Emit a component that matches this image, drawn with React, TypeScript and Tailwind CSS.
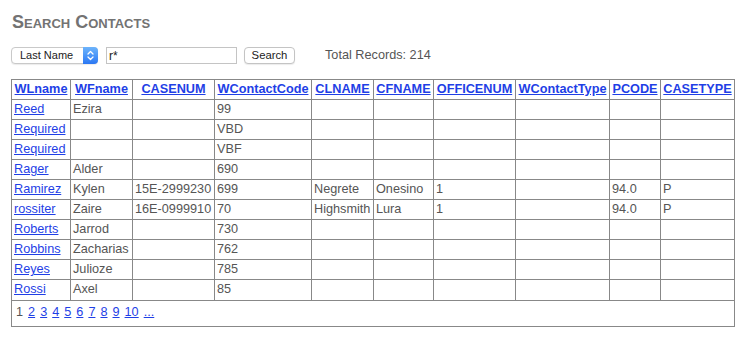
import React from "react";

const cols = [59, 62, 82, 97, 62, 60, 82, 94, 51, 74];
const headers = ["WLname", "WFname", "CASENUM", "WContactCode", "CLNAME", "CFNAME", "OFFICENUM", "WContactType", "PCODE", "CASETYPE"];
const rows: string[][] = [
  ["Reed", "Ezira", "", "99", "", "", "", "", "", ""],
  ["Required", "", "", "VBD", "", "", "", "", "", ""],
  ["Required", "", "", "VBF", "", "", "", "", "", ""],
  ["Rager", "Alder", "", "690", "", "", "", "", "", ""],
  ["Ramirez", "Kylen", "15E-2999230", "699", "Negrete", "Onesino", "1", "", "94.0", "P"],
  ["rossiter", "Zaire", "16E-0999910", "70", "Highsmith", "Lura", "1", "", "94.0", "P"],
  ["Roberts", "Jarrod", "", "730", "", "", "", "", "", ""],
  ["Robbins", "Zacharias", "", "762", "", "", "", "", "", ""],
  ["Reyes", "Julioze", "", "785", "", "", "", "", "", ""],
  ["Rossi", "Axel", "", "85", "", "", "", "", "", ""],
];

export default function App() {
  return (
    <div
      className="w-[752px] h-[346px] bg-white text-[#555] px-[11px] pt-[12px]"
      style={{ fontFamily: '"Liberation Sans", Arial, sans-serif' }}
    >
      <h1 className="text-[18px] leading-[20px] font-bold text-[#737373] pl-[1px] [font-variant:small-caps]">
        Search Contacts
      </h1>
      <div className="mt-[15px] flex items-center h-[17px]">
        <div className="relative w-[87px] h-[17px] rounded-[4px] border border-[#c9c9c9] bg-white shadow-[0_1px_1px_rgba(0,0,0,0.08)] flex items-center text-[11px] text-[#222] pl-[8px]">
          Last Name
          <div className="absolute right-[-1px] top-[-1px] bottom-[-1px] w-[15px] rounded-r-[4px] bg-gradient-to-b from-[#6db4fb] to-[#2b77f3] flex items-center justify-center">
            <svg width="7" height="11" viewBox="0 0 7 11" fill="none" stroke="white" strokeWidth="1.3" strokeLinecap="round" strokeLinejoin="round">
              <path d="M1 4 L3.5 1.5 L6 4" />
              <path d="M1 7 L3.5 9.5 L6 7" />
            </svg>
          </div>
        </div>
        <div className="ml-[8px] w-[131px] h-[17px] border border-[#c4c4c4] bg-white flex items-center pl-[2px] text-[12px] text-[#222]">
          r*
        </div>
        <div className="ml-[7px] w-[51px] h-[17px] rounded-[4px] border border-[#c4c4c4] bg-white shadow-[0_1px_1px_rgba(0,0,0,0.08)] flex items-center justify-center text-[11.3px] text-[#222]">
          Search
        </div>
        <div className="ml-[30px] text-[12.7px] text-[#555]">Total Records: 214</div>
      </div>
      <table className="mt-[15px] w-[724px] table-fixed border-collapse border border-[#888] text-[12.7px]">
        <colgroup>
          {cols.map((w, i) => (
            <col key={i} style={{ width: w }} />
          ))}
        </colgroup>
        <thead>
          <tr className="h-[20px]">
            {headers.map((h) => (
              <th key={h} className="border border-[#888] px-[2px] py-0 text-center font-bold whitespace-nowrap overflow-hidden">
                <a href="#" className="text-[#1f3fe6] underline">{h}</a>
              </th>
            ))}
          </tr>
        </thead>
        <tbody>
          {rows.map((r, ri) => (
            <tr key={ri} className="h-[20px]">
              {r.map((c, ci) => (
                <td key={ci} className="border border-[#888] px-[2px] py-0 text-left whitespace-nowrap overflow-hidden">
                  {ci === 0 ? (
                    <a href="#" className="text-[#1f3fe6] underline">{c}</a>
                  ) : (
                    c
                  )}
                </td>
              ))}
            </tr>
          ))}
          <tr className="h-[26px]">
            <td colSpan={10} className="border border-[#888] px-[4px] py-0">
              <div className="flex gap-[5px] items-center">
                <span>1</span>
                {["2", "3", "4", "5", "6", "7", "8", "9", "10", "..."].map((p) => (
                  <a key={p} href="#" className="text-[#1f3fe6] underline">{p}</a>
                ))}
              </div>
            </td>
          </tr>
        </tbody>
      </table>
    </div>
  );
}
